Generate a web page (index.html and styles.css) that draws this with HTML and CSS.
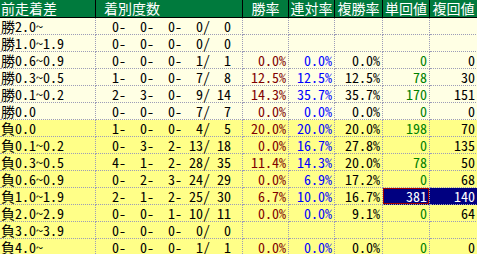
FILE: index.html
```html
<!DOCTYPE html>
<html lang="ja">
<head>
<meta charset="utf-8">
<title>前走着差</title>
<link rel="stylesheet" href="styles.css">
</head>
<body>
<div class="sheet">
  <div class="row head">
    <div class="h k">前走着差</div>
    <div class="h rec-h">着別度数</div>
    <div class="h">勝率</div>
    <div class="h">連対率</div>
    <div class="h">複勝率</div>
    <div class="h">単回値</div>
    <div class="h">複回値</div>
  </div>

  <div class="row win">
    <div class="c k">勝2.0～</div>
    <div class="c rec"><span>0-</span><span>0-</span><span>0-</span><span>0/</span><span>0</span></div>
    <div class="c p1"></div><div class="c p2"></div><div class="c p3"></div><div class="c v1"></div><div class="c v2"></div>
  </div>
  <div class="row win">
    <div class="c k">勝1.0～1.9</div>
    <div class="c rec"><span>0-</span><span>0-</span><span>0-</span><span>0/</span><span>0</span></div>
    <div class="c p1"></div><div class="c p2"></div><div class="c p3"></div><div class="c v1"></div><div class="c v2"></div>
  </div>
  <div class="row win">
    <div class="c k">勝0.6～0.9</div>
    <div class="c rec"><span>0-</span><span>0-</span><span>0-</span><span>1/</span><span>1</span></div>
    <div class="c p1">0.0%</div><div class="c p2">0.0%</div><div class="c p3">0.0%</div><div class="c v1">0</div><div class="c v2">0</div>
  </div>
  <div class="row win">
    <div class="c k">勝0.3～0.5</div>
    <div class="c rec"><span>1-</span><span>0-</span><span>0-</span><span>7/</span><span>8</span></div>
    <div class="c p1">12.5%</div><div class="c p2">12.5%</div><div class="c p3">12.5%</div><div class="c v1">78</div><div class="c v2">30</div>
  </div>
  <div class="row win">
    <div class="c k">勝0.1～0.2</div>
    <div class="c rec"><span>2-</span><span>3-</span><span>0-</span><span>9/</span><span>14</span></div>
    <div class="c p1">14.3%</div><div class="c p2">35.7%</div><div class="c p3">35.7%</div><div class="c v1">170</div><div class="c v2">151</div>
  </div>
  <div class="row win">
    <div class="c k">勝0.0</div>
    <div class="c rec"><span>0-</span><span>0-</span><span>0-</span><span>7/</span><span>7</span></div>
    <div class="c p1">0.0%</div><div class="c p2">0.0%</div><div class="c p3">0.0%</div><div class="c v1">0</div><div class="c v2">0</div>
  </div>

  <div class="row lose">
    <div class="c k">負0.0</div>
    <div class="c rec"><span>1-</span><span>0-</span><span>0-</span><span>4/</span><span>5</span></div>
    <div class="c p1">20.0%</div><div class="c p2">20.0%</div><div class="c p3">20.0%</div><div class="c v1">198</div><div class="c v2">70</div>
  </div>
  <div class="row lose">
    <div class="c k">負0.1～0.2</div>
    <div class="c rec"><span>0-</span><span>3-</span><span>2-</span><span>13/</span><span>18</span></div>
    <div class="c p1">0.0%</div><div class="c p2">16.7%</div><div class="c p3">27.8%</div><div class="c v1">0</div><div class="c v2">135</div>
  </div>
  <div class="row lose">
    <div class="c k">負0.3～0.5</div>
    <div class="c rec"><span>4-</span><span>1-</span><span>2-</span><span>28/</span><span>35</span></div>
    <div class="c p1">11.4%</div><div class="c p2">14.3%</div><div class="c p3">20.0%</div><div class="c v1">78</div><div class="c v2">50</div>
  </div>
  <div class="row lose">
    <div class="c k">負0.6～0.9</div>
    <div class="c rec"><span>0-</span><span>2-</span><span>3-</span><span>24/</span><span>29</span></div>
    <div class="c p1">0.0%</div><div class="c p2">6.9%</div><div class="c p3">17.2%</div><div class="c v1">0</div><div class="c v2">68</div>
  </div>
  <div class="row lose">
    <div class="c k">負1.0～1.9</div>
    <div class="c rec"><span>2-</span><span>1-</span><span>2-</span><span>25/</span><span>30</span></div>
    <div class="c p1">6.7%</div><div class="c p2">10.0%</div><div class="c p3">16.7%</div><div class="c v1 hl sel">381</div><div class="c v2 hl">140</div>
  </div>
  <div class="row lose">
    <div class="c k">負2.0～2.9</div>
    <div class="c rec"><span>0-</span><span>0-</span><span>1-</span><span>10/</span><span>11</span></div>
    <div class="c p1">0.0%</div><div class="c p2">0.0%</div><div class="c p3">9.1%</div><div class="c v1">0</div><div class="c v2">64</div>
  </div>
  <div class="row lose">
    <div class="c k">負3.0～3.9</div>
    <div class="c rec"><span>0-</span><span>0-</span><span>0-</span><span>0/</span><span>0</span></div>
    <div class="c p1"></div><div class="c p2"></div><div class="c p3"></div><div class="c v1"></div><div class="c v2"></div>
  </div>
  <div class="row lose">
    <div class="c k">負4.0～</div>
    <div class="c rec"><span>0-</span><span>0-</span><span>0-</span><span>1/</span><span>1</span></div>
    <div class="c p1">0.0%</div><div class="c p2">0.0%</div><div class="c p3">0.0%</div><div class="c v1">0</div><div class="c v2">0</div>
  </div>
</div>
</body>
</html>
```

FILE: styles.css
```css
html, body {
  margin: 0;
  padding: 0;
  background: #ffffff;
  overflow: hidden;
}

.sheet {
  display: grid;
  grid-template-columns: 96px 147px 46px 46px 48px 47px 48px;
  grid-template-rows: 18px;
  grid-auto-rows: 17px;
  font-family: "Noto Sans CJK JP", sans-serif;
  font-size: 14px;
  font-feature-settings: "hwid" 1;
  color: #000000;
}

.row {
  display: contents;
}

.h {
  box-sizing: border-box;
  background: #007a3d;
  color: #ffffff;
  border-right: 1px solid #000000;
  border-bottom: 1px solid #000000;
  line-height: 16px;
  text-align: center;
  white-space: nowrap;
}

.h.k {
  text-align: left;
  padding-left: 1px;
}

.h.rec-h {
  text-align: left;
  padding-left: 8px;
}

.c {
  box-sizing: border-box;
  border-right: 1px dotted #9c9cb8;
  border-bottom: 1px dotted #9c9cb8;
  line-height: 16px;
  text-align: right;
  padding: 0 2px;
  white-space: nowrap;
}

.win .c {
  background: #ffffe4;
}

.lose .c {
  background: #ffff88;
}

.c.k {
  text-align: left;
  padding-left: 1px;
}

.c.rec {
  display: grid;
  grid-template-columns: 28px 28px 28px 28px 21px;
  justify-items: end;
  padding-left: 2px;
}

.p1 {
  color: #800000;
}

.p2 {
  color: #0000ff;
}

.v1 {
  color: #008000;
}

.c.hl {
  background: #000080;
  color: #ffffff;
}

.c.sel {
  box-shadow: inset 0 0 0 1px #a00000;
}
```
